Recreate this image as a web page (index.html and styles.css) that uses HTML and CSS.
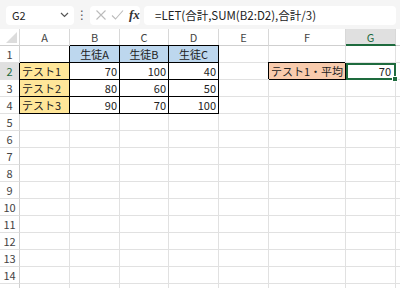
FILE: index.html
```html
<html>

<head>
  <title>LET sample</title>
  <link rel="stylesheet" href="styles.css">
</head>

<body>
  <div class="bar">
    <div class="namebox">G2
      <svg class="chev" width="9" height="6" viewBox="0 0 9 6"><path d="M1 1l3.5 3.5L8 1" fill="none" stroke="#555" stroke-width="1.2"/></svg>
    </div>
    <div class="dots">&#8942;</div>
    <div class="fxbox">
      <svg width="12" height="12" viewBox="0 0 12 12"><path d="M1.5 1.5l9 9M10.5 1.5l-9 9" stroke="#bbb" stroke-width="1.1"/></svg>
      <svg width="13" height="12" viewBox="0 0 13 12"><path d="M1 6.5l3.5 3.5L12 1.5" fill="none" stroke="#bbb" stroke-width="1.1"/></svg>
      <span class="fx">fx</span>
    </div>
    <div class="formula">=LET(合計,SUM(B2:D2),合計/3)</div>
  </div>

  <div class="sheet" id="sheet">
    <div class="hd corner"><span class="tri"></span></div>
    <div class="hd">A</div><div class="hd">B</div><div class="hd">C</div><div class="hd">D</div>
    <div class="hd">E</div><div class="hd">F</div><div class="hd sel">G</div><div class="hd"></div>

    <div class="rh">1</div>
    <div class="c bd"></div>
    <div class="c bd top blue ctr">生徒A</div>
    <div class="c bd top blue ctr">生徒B</div>
    <div class="c bd top blue ctr">生徒C</div>
    <div class="c"></div><div class="c"></div><div class="c"></div><div class="c"></div>

    <div class="rh rsel">2</div>
    <div class="c bd left yellow">テスト1</div>
    <div class="c bd num">70</div>
    <div class="c bd num">100</div>
    <div class="c bd num">40</div>
    <div class="c"></div>
    <div class="c bd box orange">テスト1・平均</div>
    <div class="c num active">70<span class="handle"></span></div>
    <div class="c"></div>

    <div class="rh">3</div>
    <div class="c bd left yellow">テスト2</div>
    <div class="c bd num">80</div>
    <div class="c bd num">60</div>
    <div class="c bd num">50</div>
    <div class="c"></div><div class="c"></div><div class="c"></div><div class="c"></div>

    <div class="rh">4</div>
    <div class="c bd left yellow">テスト3</div>
    <div class="c bd num">90</div>
    <div class="c bd num">70</div>
    <div class="c bd num">100</div>
    <div class="c"></div><div class="c"></div><div class="c"></div><div class="c"></div>
  </div>

  <script>
    // empty rows below the table; the last one only peeks in at the bottom edge
    var sheet = document.getElementById('sheet');
    for (var r = 5; r <= 15; r++) {
      var h = document.createElement('div');
      h.className = 'rh';
      if (r < 15) h.textContent = r;
      sheet.appendChild(h);
      for (var i = 0; i < 8; i++) {
        var c = document.createElement('div');
        c.className = 'c';
        sheet.appendChild(c);
      }
    }
  </script>
</body>

</html>
```

FILE: styles.css
```css
body {
  margin: 0;
  background: #fff;
  font-family: "Noto Sans CJK JP", "Noto Sans", sans-serif;
  font-size: 11px;
  color: #222;
  overflow: hidden;
}

.bar {
  height: 29px;
  background: #f5f5f5;
  display: flex;
  align-items: center;
  box-sizing: border-box;
  padding-top: 1px;
}

.namebox, .fxbox, .formula {
  height: 19px;
  background: #fff;
  border-radius: 4px;
  box-sizing: border-box;
  display: flex;
  align-items: center;
}

.namebox {
  margin-left: 6px;
  width: 68px;
  padding-left: 6px;
  font-size: 11px;
  justify-content: space-between;
  padding-right: 5px;
}

.dots {
  width: 16px;
  text-align: center;
  color: #555;
  font-size: 12px;
  font-family: "DejaVu Sans", sans-serif;
}

.fxbox {
  width: 50px;
  padding-left: 5px;
  gap: 4px;
}

.fx {
  font-family: "Liberation Serif", serif;
  font-style: italic;
  font-size: 13px;
  color: #333;
  font-weight: bold;
  margin-left: 1px;
}

.formula {
  margin-left: 4px;
  flex: 1;
  margin-right: 4px;
  padding-left: 11px;
  font-size: 11.5px;
  color: #222;
}

.sheet {
  display: grid;
  grid-template-columns: 20px 50px 50px 49px 50px 50px 77px 50px 1fr;
  grid-template-rows: 17px;
  grid-auto-rows: 17px;
}

.hd, .rh, .c {
  box-sizing: border-box;
  border-right: 1px solid #e1e1e1;
  border-bottom: 1px solid #e1e1e1;
  position: relative;
}

.hd {
  text-align: center;
  color: #444;
  line-height: 16px;
  border-right-color: #d8d8d8;
  border-bottom-color: #cfcfcf;
}

.corner .tri {
  position: absolute;
  right: 2px;
  bottom: 2px;
  width: 0;
  height: 0;
  border-left: 11px solid transparent;
  border-bottom: 11px solid #dcdcdc;
}

.hd.sel {
  background: #e0e0e0;
  color: #1e6b3e;
  border-bottom: 2px solid #1e6b3e;
}

.rh {
  text-align: center;
  color: #444;
  line-height: 16px;
  border-right-color: #d0d0d0;
}

.rh.rsel {
  background: #e0e0e0;
  color: #1e6b3e;
}

.c {
  line-height: 16px;
  padding: 0 2px;
  white-space: nowrap;
}

.num {
  text-align: right;
}

.ctr {
  text-align: center;
}

.bd {
  border-right-color: #000;
  border-bottom-color: #000;
}

.top {
  box-shadow: 0 -1px 0 #000;
}

.left {
  box-shadow: -1px 0 0 #000;
}

.box {
  box-shadow: -1px -1px 0 #000;
}

.blue {
  background: #bdd7ee;
}

.yellow {
  background: #ffe699;
}

.orange {
  background: #f8cbad;
}

.active {
  outline: 2px solid #1e6b3e;
  outline-offset: -2px;
  padding-right: 4px;
  z-index: 1;
}

.handle {
  position: absolute;
  right: -3px;
  bottom: -3px;
  width: 4px;
  height: 4px;
  background: #1e6b3e;
  border: 1px solid #fff;
}
```
